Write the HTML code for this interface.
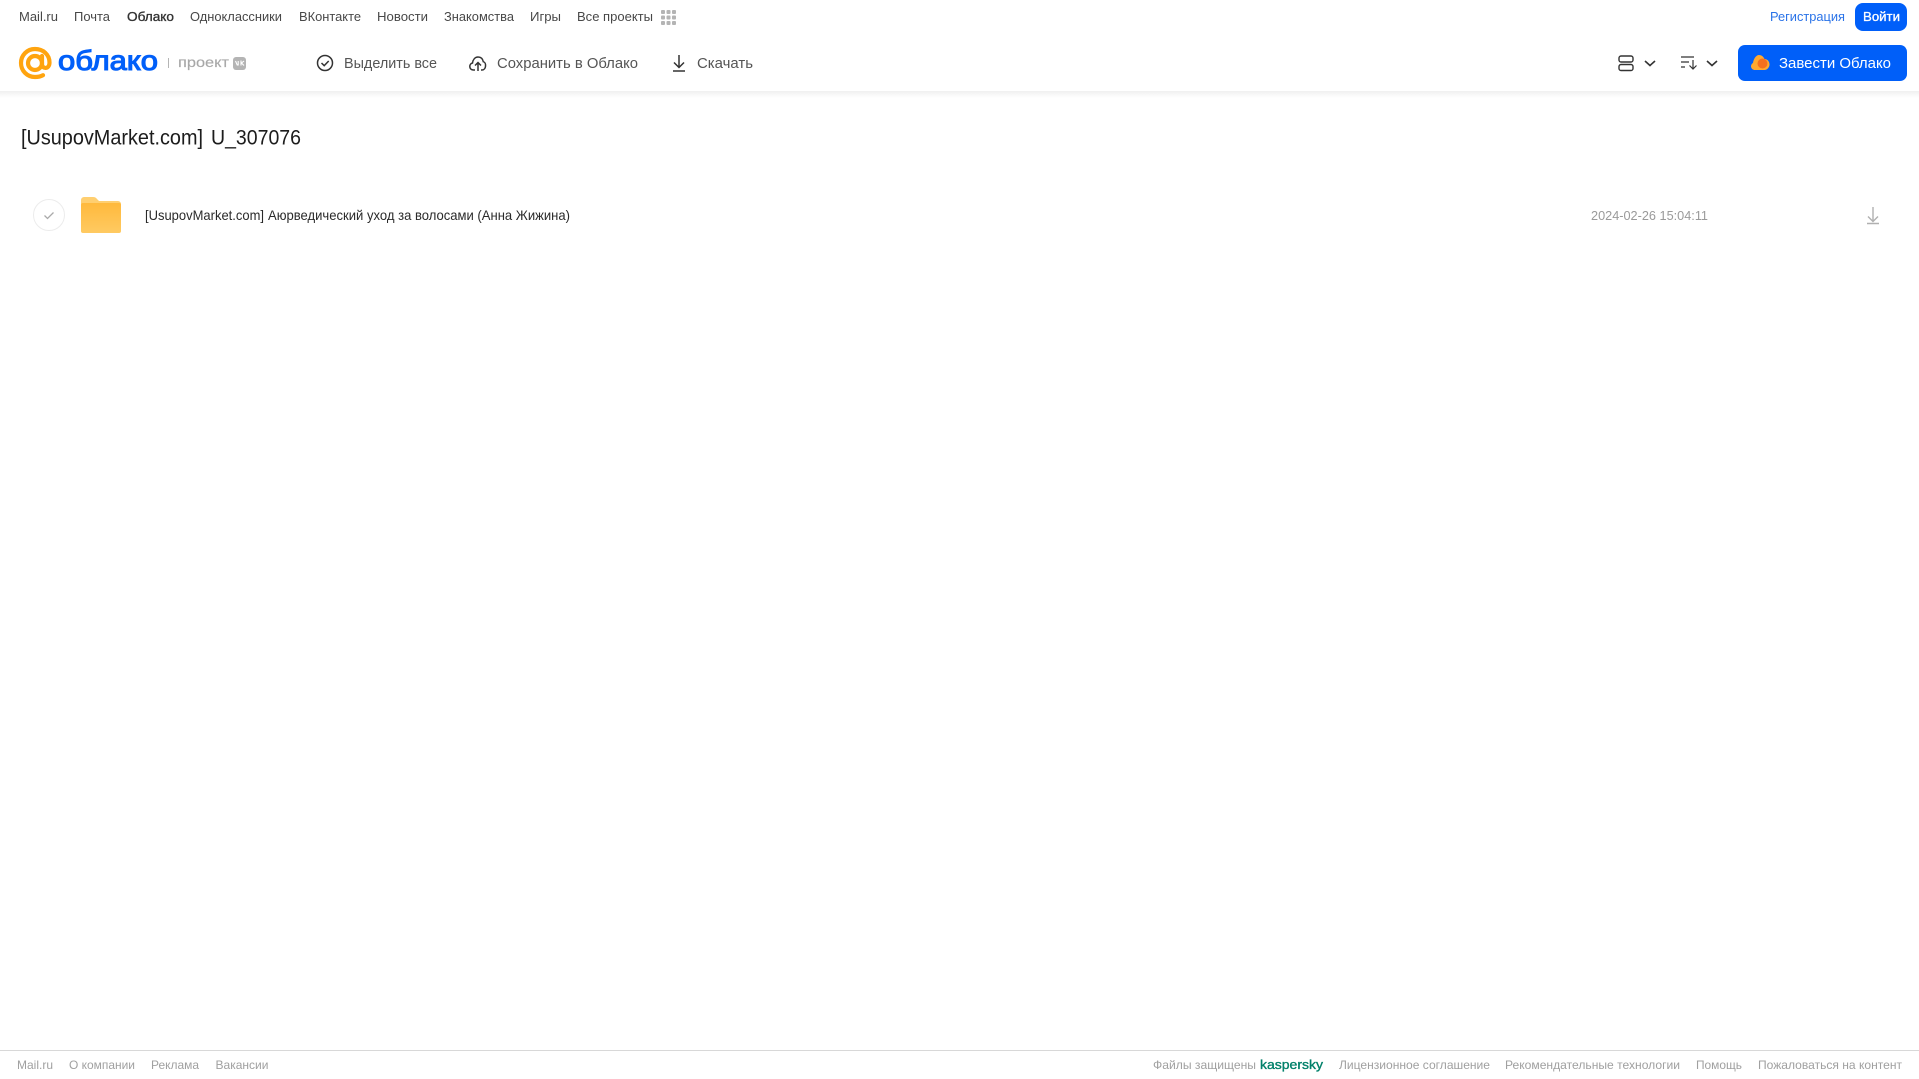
<!DOCTYPE html>
<html lang="ru"><head><meta charset="utf-8"><title>Облако</title>
<style>
html,body{margin:0;padding:0;background:#fff;width:1919px;height:1079px;overflow:hidden}
svg{display:block;position:absolute;left:0;top:0}
text{font-family:"Liberation Sans",sans-serif}
.n{font-size:13px;fill:#484848}
.a{font-size:15px;fill:#555}
.f{font-size:12px;fill:#a0a0a0}
</style></head><body>
<svg width="1919" height="1079" viewBox="0 0 1919 1079" xmlns="http://www.w3.org/2000/svg">
<defs>
<linearGradient id="sh" x1="0" y1="0" x2="0" y2="1"><stop offset="0" stop-color="#f0f0f0"/><stop offset="1" stop-color="#fff"/></linearGradient>
<linearGradient id="fo" x1="0" y1="0" x2="0" y2="1"><stop offset="0" stop-color="#ffb93c"/><stop offset="1" stop-color="#ffca62"/></linearGradient>
</defs>
<rect x="0" y="91" width="1919" height="7" fill="url(#sh)"/>
<!-- top nav -->
<g class="top">
<text class="n" x="19" y="21" textLength="39" lengthAdjust="spacingAndGlyphs">Mail.ru</text>
<text class="n" x="74" y="21" textLength="36" lengthAdjust="spacingAndGlyphs">Почта</text>
<text class="n" x="127" y="21" textLength="47" lengthAdjust="spacingAndGlyphs" style="fill:#333" stroke="#333" stroke-width=".35">Облако</text>
<text class="n" x="190" y="21" textLength="92" lengthAdjust="spacingAndGlyphs">Одноклассники</text>
<text class="n" x="299" y="21" textLength="62" lengthAdjust="spacingAndGlyphs">ВКонтакте</text>
<text class="n" x="377" y="21" textLength="51" lengthAdjust="spacingAndGlyphs">Новости</text>
<text class="n" x="444" y="21" textLength="70" lengthAdjust="spacingAndGlyphs">Знакомства</text>
<text class="n" x="530" y="21" textLength="31" lengthAdjust="spacingAndGlyphs">Игры</text>
<text class="n" x="577" y="21" textLength="76" lengthAdjust="spacingAndGlyphs">Все проекты</text>
<g fill="#b4b4b4"><rect x="661" y="10" width="4" height="4" rx="1"/><rect x="666.5" y="10" width="4" height="4" rx="1"/><rect x="672" y="10" width="4" height="4" rx="1"/><rect x="661" y="15.5" width="4" height="4" rx="1"/><rect x="666.5" y="15.5" width="4" height="4" rx="1"/><rect x="672" y="15.5" width="4" height="4" rx="1"/><rect x="661" y="21" width="4" height="4" rx="1"/><rect x="666.5" y="21" width="4" height="4" rx="1"/><rect x="672" y="21" width="4" height="4" rx="1"/></g>
<text x="1770" y="21" font-size="13" fill="#2a73e8" textLength="75" lengthAdjust="spacingAndGlyphs">Регистрация</text>
<rect x="1855" y="3" width="52" height="28" rx="8" fill="#005ff9"/>
<text x="1863" y="21" font-size="13" fill="#fff" stroke="#fff" stroke-width=".3" textLength="37" lengthAdjust="spacingAndGlyphs">Войти</text>
</g>
<!-- logo -->
<g fill="none" stroke="#ffa40f" stroke-width="4.2" stroke-linecap="round"><circle cx="35" cy="63" r="7"/><path d="M42 56v8c0 5.500 7.500 5.500 7.500-1.500C49.500 54.500 43 49 35 49c-8 0-14 6.300-14 14s6 14 14 14c3 0 6-.6 8-1.800"/></g>
<text x="58" y="70" font-size="27.500" fill="#005ff9" stroke="#005ff9" stroke-width="1.100" textLength="100" lengthAdjust="spacingAndGlyphs">облако</text>
<rect x="168" y="58" width="1" height="10" fill="#b5b5b5"/>
<text x="178" y="67" font-size="14" fill="#a8a8a8" stroke="#a8a8a8" stroke-width=".15" textLength="51" lengthAdjust="spacingAndGlyphs">проект</text>
<rect x="233" y="57" width="13" height="13" rx="3" fill="#b4b4b4"/>
<path d="M235.500 61l1.700 4h1V61M244 61l-2.500 2 2.500 2.500M241 60.500v5" fill="none" stroke="#fff" stroke-width="1.100"/>
<!-- actions -->
<circle cx="325" cy="63" r="7.500" fill="none" stroke="#333" stroke-width="1.500"/>
<path d="M321.500 63l2.700 2.700 4.500-4.700" fill="none" stroke="#333" stroke-width="1.500"/>
<text class="a" x="344" y="68" textLength="93" lengthAdjust="spacingAndGlyphs">Выделить все</text>
<path d="M475 70h-1.500c-4.500 0-5-6-1-7C473 59.500 475 57 478 57c3 0 4.800 2 5.300 4.700 3.400.8 3 8.300-1.300 8.300h-1" fill="none" stroke="#333" stroke-width="1.500"/>
<path d="M478 71v-8.500M475 65.500l3-3 3 3" fill="none" stroke="#333" stroke-width="1.500"/>
<text class="a" x="497" y="68" textLength="141" lengthAdjust="spacingAndGlyphs">Сохранить в Облако</text>
<path d="M679 55v12M674 62.500l5 5 5-5M673 71h12" fill="none" stroke="#333" stroke-width="1.500"/>
<text class="a" x="697" y="68" textLength="56" lengthAdjust="spacingAndGlyphs">Скачать</text>
<!-- right tools -->
<rect x="1619" y="56" width="14" height="6" rx="2" fill="none" stroke="#333" stroke-width="1.400"/>
<rect x="1619" y="64.500" width="14" height="6" rx="2" fill="none" stroke="#333" stroke-width="1.400"/>
<path d="M1645 61l5 4.500 5-4.500" fill="none" stroke="#333" stroke-width="1.600"/>
<path d="M1681 57h13M1681 62h8M1681 67h4M1693 60v9M1689.500 65.500l3.500 3.500 3.500-3.500" fill="none" stroke="#333" stroke-width="1.200"/>
<path d="M1707 61l5 4.500 5-4.500" fill="none" stroke="#333" stroke-width="1.600"/>
<rect x="1738" y="45" width="169" height="36" rx="7" fill="#005ff9"/>
<path d="M1755 70c-4 0-5.500-5-2-7 .5-4 3-8 6-8 3 0 4.500 2 5.500 4 3 0 5 2.500 5 5.500s-2.500 5.500-5 5.500z" fill="#ffa930"/>
<circle cx="1762.500" cy="63.500" r="5" fill="#f4701f"/>
<text x="1779" y="68" font-size="15" fill="#fff" textLength="112" lengthAdjust="spacingAndGlyphs">Завести Облако</text>
<!-- title -->
<text x="21" y="144.500" font-size="21" fill="#1c1c1c" textLength="182" lengthAdjust="spacingAndGlyphs">[UsupovMarket.com]</text>
<text x="211" y="144.500" font-size="21" fill="#1c1c1c" textLength="90" lengthAdjust="spacingAndGlyphs">U_307076</text>
<!-- row -->
<circle cx="49" cy="215" r="15.500" fill="#fff" stroke="#ececec" stroke-width="1"/>
<path d="M44.500 215.500l3 3 6-6" fill="none" stroke="#aaa" stroke-width="1.300"/>
<path d="M81 200a3 3 0 0 1 3-3h9c2 0 3 .7 4 2l2 2h19a3 3 0 0 1 3 3v2H81z" fill="#ffcf70"/>
<rect x="81" y="203" width="40" height="30" rx="2" fill="url(#fo)"/>
<text x="145" y="220" font-size="14" fill="#2a2a2a" textLength="119" lengthAdjust="spacingAndGlyphs">[UsupovMarket.com]</text>
<text x="268" y="220" font-size="14" fill="#2a2a2a" textLength="302" lengthAdjust="spacingAndGlyphs">Аюрведический уход за волосами (Анна Жижина)</text>
<text x="1591" y="220" font-size="13" fill="#9a9a9a" textLength="117" lengthAdjust="spacingAndGlyphs">2024-02-26 15:04:11</text>
<path d="M1873 207v14M1868 216.500l5 5 5-5M1867 223.500h12" fill="none" stroke="#b0b0b0" stroke-width="1.400"/>
<!-- footer -->
<rect x="0" y="1050" width="1919" height="1" fill="#d8d8d8"/>
<text class="f" x="17" y="1069" textLength="36" lengthAdjust="spacingAndGlyphs">Mail.ru</text>
<text class="f" x="69" y="1069" textLength="66" lengthAdjust="spacingAndGlyphs">О компании</text>
<text class="f" x="151" y="1069" textLength="48" lengthAdjust="spacingAndGlyphs">Реклама</text>
<text class="f" x="215.500" y="1069" textLength="53" lengthAdjust="spacingAndGlyphs">Вакансии</text>
<text class="f" x="1153" y="1069" textLength="103" lengthAdjust="spacingAndGlyphs">Файлы защищены</text>
<text x="1260" y="1069" font-size="13" fill="#00806a" stroke="#00806a" stroke-width=".35" textLength="63" lengthAdjust="spacingAndGlyphs">kaspersky</text>
<text class="f" x="1339" y="1069" textLength="151" lengthAdjust="spacingAndGlyphs">Лицензионное соглашение</text>
<text class="f" x="1505" y="1069" textLength="175" lengthAdjust="spacingAndGlyphs">Рекомендательные технологии</text>
<text class="f" x="1696" y="1069" textLength="46" lengthAdjust="spacingAndGlyphs">Помощь</text>
<text class="f" x="1758" y="1069" textLength="144" lengthAdjust="spacingAndGlyphs">Пожаловаться на контент</text>
</svg>
</body></html>
